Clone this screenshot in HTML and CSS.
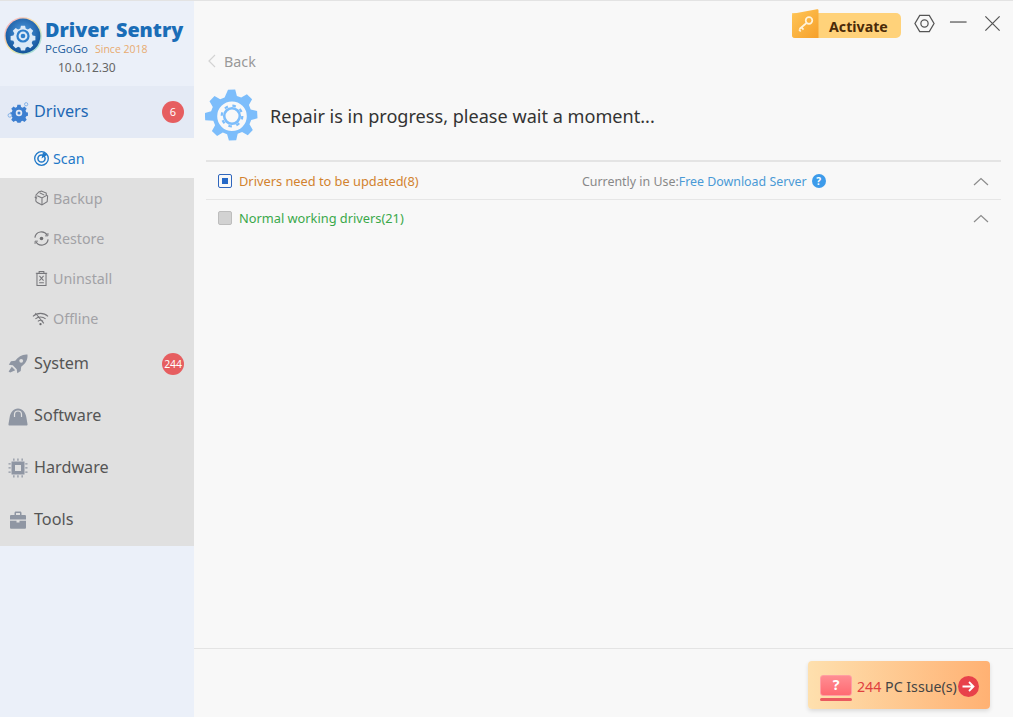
FILE: index.html
```html
<!DOCTYPE html>
<html lang="en">
<head>
<meta charset="utf-8">
<title>Driver Sentry</title>
<link rel="stylesheet" href="styles.css">
</head>
<body>
<div class="app">
  <aside class="sidebar">
    <div class="brand">
      <div class="brand-row">
        <svg class="logo" viewBox="0 0 38 38">
          <defs>
            <linearGradient id="ring" x1="0" y1="0" x2="1" y2="1"><stop offset="0" stop-color="#f3a6c8"/><stop offset=".5" stop-color="#f7e6a0"/><stop offset="1" stop-color="#7fd8ee"/></linearGradient>
            <radialGradient id="ball" cx=".5" cy=".4" r=".65"><stop offset="0" stop-color="#4f9be0"/><stop offset="1" stop-color="#0d4d94"/></radialGradient>
          </defs>
          <circle cx="19" cy="19" r="18.800" fill="url(#ring)"/>
          <circle cx="19" cy="19" r="17.400" fill="url(#ball)"/>
          <path d="M16.500 6.500h5l.8 3.400 2.600 1.100 3-1.800 3.500 3.500-1.800 3 1.100 2.600 3.400.8v5l-3.400.8-1.100 2.600 1.800 3-3.500 3.500-3-1.800-2.600 1.100-.8 3.400h-5l-.8-3.400-2.600-1.100-3 1.800-3.500-3.500 1.800-3-1.100-2.600-3.400-.8v-5l3.400-.8 1.100-2.600-1.800-3 3.500-3.500 3 1.800 2.600-1.100z" fill="#dbe9f7" transform="translate(19 19) scale(.82) translate(-19 -19)"/>
          <circle cx="19" cy="19" r="6.600" fill="#2f7fcb"/>
          <circle cx="19" cy="19" r="4.400" fill="#dbe9f7"/>
          <circle cx="19" cy="19" r="2.300" fill="#2f7fcb"/>
        </svg>
        <div class="brand-text">
          <div class="brand-name">Driver Sentry</div>
          <div class="brand-sub"><span class="brand-co">PcGoGo</span><span class="brand-since">Since 2018</span></div>
        </div>
      </div>
      <div class="version">10.0.12.30</div>
    </div>

    <nav class="nav">
      <div class="nav-item active">
        <svg class="nav-icon" viewBox="0 0 24 24"><path fill="#3d7fd0" d="M10.500 2.500h4l.5 2.600 2 .9 2.200-1.500 2.800 2.800-1.500 2.200.9 2 2.100.5v4l-2.100.5-.9 2 1.500 2.200-2.800 2.800-2.200-1.500-2 .9-.5 1.600h-4l-.5-1.600-2-.9-2.200 1.500-2.800-2.800 1.500-2.200-.9-2-2-.5v-4l2-.5.9-2-1.500-2.200 2.800-2.800 2.200 1.500 2-.9z" transform="translate(12.500 12.500) scale(.85) translate(-12.500 -12.500)"/><circle cx="12.500" cy="12.500" r="3.400" fill="#e4eaf5"/><circle cx="12.500" cy="12.500" r="1.600" fill="#3d7fd0"/><circle cx="3" cy="15" r="1.900" fill="#e4eaf5" stroke="#7fb0e6"/><circle cx="20" cy="3.400" r="1.700" fill="#e4eaf5" stroke="#7fb0e6"/></svg>
        <span class="nav-label">Drivers</span>
        <span class="badge">6</span>
      </div>
      <div class="sub-item current">
        <svg class="sub-icon" viewBox="0 0 18 18"><circle cx="9" cy="9" r="7.200" fill="none" stroke="#1f78c8" stroke-width="1.400"/><circle cx="9" cy="9" r="3.800" fill="none" stroke="#1f78c8" stroke-width="1.600"/><path d="M9 9l1.600-6.500 4.600 2.600z" fill="#1f78c8"/></svg>
        <span>Scan</span>
      </div>
      <div class="sub-item">
        <svg class="sub-icon" viewBox="0 0 18 18" fill="none" stroke="#77777b" stroke-width="1.100"><path d="M6 2.200l3-1.200 5 2.200v2l1.500 1.200-.5 6-5.500 3.400-5-2.500-1.500-1.500.2-6.500z"/><path d="M4.500 6l5 2.500 5-2.800M9.500 8.500v7M7 3l5 2.400M1.800 7.500l2.500 1.300"/></svg>
        <span>Backup</span>
      </div>
      <div class="sub-item">
        <svg class="sub-icon" viewBox="0 0 18 18" fill="none" stroke="#77777b" stroke-width="1.300"><path d="M2 8a7 7 0 0 1 13-2.500M16 10a7 7 0 0 1-13 2.500"/><path d="M15.800 3.200v3h-3M2.200 14.800v-3h3" stroke-width="1"/><circle cx="9" cy="9" r="1.900" fill="#6d6d70" stroke="none"/></svg>
        <span>Restore</span>
      </div>
      <div class="sub-item">
        <svg class="sub-icon" viewBox="0 0 18 18" fill="none" stroke="#77777b" stroke-width="1.100"><path d="M3 3.400h12M6.500 3V1.600h5V3M4.200 3.600h9.600v12.800H4.200z"/><path d="M6.800 6.200l4.400 5M11.200 6.200l-4.400 5M6.500 13.600h5"/></svg>
        <span>Uninstall</span>
      </div>
      <div class="sub-item">
        <svg class="sub-icon wide" viewBox="0 0 18 18" fill="none" stroke="#77777b" stroke-width="1.100"><path d="M1 6.800a11.500 11.500 0 0 1 16 0M3.600 9.400a8 8 0 0 1 10.800 0M6.200 12a4.400 4.400 0 0 1 5.600 0M3.500 3.200l9 11"/><circle cx="9" cy="15" r="1.200" fill="#6d6d70" stroke="none"/></svg>
        <span>Offline</span>
      </div>
      <div class="nav-item">
        <svg class="nav-icon" viewBox="0 0 20 20"><path fill="#8f96a3" d="M19.500.5c-5.300-.4-9.300 2-12.300 6.300L3 7.300.8 10.700l4 .6 3.900 3.900.6 4 3.400-2.200.5-4.200c4.300-3 6.700-7 6.300-12.300z"/><circle cx="13.200" cy="6.800" r="1.900" fill="#e0e0e0"/><path fill="#8f96a3" d="M3.800 12.800l3.400 3.400-5 2.400-1.600-1z"/></svg>
        <span class="nav-label">System</span>
        <span class="badge small">244</span>
      </div>
      <div class="nav-item">
        <svg class="nav-icon" viewBox="0 0 20 20"><path fill="#8f96a3" d="M1.700 19.500c-.9 0-1.400-.5-1.200-1.500l1.200-7C2.500 6.500 5.500 2.500 10 2.500s7.500 4 8.300 8.500l1.200 7c.2 1-.3 1.500-1.200 1.500z" /><path d="M6.500 11V8.500a3.500 3.500 0 0 1 7 0V11" fill="none" stroke="#e0e0e0" stroke-width="1.200"/></svg>
        <span class="nav-label">Software</span>
      </div>
      <div class="nav-item">
        <svg class="nav-icon" viewBox="0 0 20 20" fill="#8f96a3"><path fill-rule="evenodd" d="M3.500 3.500h13v13h-13zM7 7v6h6V7z"/><path d="M.5 5.200h2.200v1.300H.5zM.5 9.300h2.200v1.300H.5zM.5 13.500h2.200v1.300H.5zM17.300 5.200h2.200v1.300h-2.200zM17.300 9.300h2.200v1.300h-2.200zM17.300 13.500h2.200v1.300h-2.200zM5.200.5h1.300v2.200H5.200zM9.300.5h1.300v2.200H9.300zM13.500.5h1.300v2.200h-1.300zM5.200 17.300h1.300v2.200H5.200zM9.300 17.300h1.300v2.200H9.300zM13.500 17.300h1.300v2.200h-1.300z"/></svg>
        <span class="nav-label">Hardware</span>
      </div>
      <div class="nav-item">
        <svg class="nav-icon" viewBox="0 0 20 20" fill="#8f96a3"><path d="M2 9.500V6.300c0-.8.500-1.300 1.300-1.300h3.200V3c0-.8.500-1.500 1.500-1.500h4c1 0 1.500.7 1.500 1.500v2h3.200c.8 0 1.300.5 1.300 1.300v3.200zM8 5h4V3H8zM2 10.700h6.500v1.800h3v-1.800H18V17.500c0 .8-.5 1.300-1.300 1.300H3.300c-.8 0-1.300-.5-1.300-1.300z"/></svg>
        <span class="nav-label">Tools</span>
      </div>
    </nav>
  </aside>

  <main class="main">
    <header class="topbar">
      <div class="activate">
        <svg class="key-tab" viewBox="0 0 27 29">
          <defs><linearGradient id="tab" x1="0" y1="0" x2="1" y2="1"><stop offset="0" stop-color="#ffc658"/><stop offset="1" stop-color="#f6a02a"/></linearGradient></defs>
          <path d="M2 4.500 25 .2c1-.2 1.500.3 1.500 1.300V29H3c-1.800 0-3-1-3-3V7c0-1.300.8-2.200 2-2.500z" fill="url(#tab)"/>
          <g fill="none" stroke="#fff3d9" stroke-width="1.700"><circle cx="17" cy="11.500" r="3.300"/><path d="M14.500 14 7.500 20M9.500 18.300l2 2.300M7 20.500l1.700 2"/></g>
        </svg>
        <span class="activate-label">Activate</span>
      </div>
      <button class="win-btn settings" aria-label="Settings">
        <svg viewBox="0 0 22 22" fill="none" stroke="#555" stroke-width="1.300"><path d="M6 2.500h10l5 8.500-5 8.500H6L1 11z"/><circle cx="11" cy="11" r="3.800"/></svg>
      </button>
      <button class="win-btn minimize" aria-label="Minimize">
        <svg viewBox="0 0 20 20" stroke="#555" stroke-width="1.300"><path d="M1 9.500h17.500"/></svg>
      </button>
      <button class="win-btn close" aria-label="Close">
        <svg viewBox="0 0 20 20" stroke="#555" stroke-width="1.300"><path d="M2.500 2.500l15 15M17.500 2.500l-15 15"/></svg>
      </button>
    </header>

    <div class="back">
      <svg viewBox="0 0 8 14" fill="none" stroke="#d3d3d3" stroke-width="1.200"><path d="M7 1 1 7l6 6"/></svg>
      <span>Back</span>
    </div>

    <div class="status">
      <svg class="gear" viewBox="0 0 54 54">
        <path fill="#7cbdfb" fill-rule="evenodd" d="M23 .8l7.200-.3 1.700 6.400 4.300 1.700 5.700-3.300 5.200 5-3.200 5.700 1.800 4.400 6.400 1.500.4 7.300-6.300 1.800-1.700 4.300 3.300 5.700-5 5.200-5.700-3.200-4.400 1.800-1.500 6.400-7.300.4-1.800-6.300-4.300-1.700-5.700 3.300-5.200-5 3.200-5.700-1.800-4.400L.2 31.300l-.4-7.300 6.300-1.800 1.700-4.300-3.300-5.700 5-5.200 5.700 3.200 4.400-1.800zM27 12.500a14.800 14.800 0 1 0 0 29.600 14.800 14.800 0 0 0 0-29.600z"/>
        <g fill="none" stroke="#7cbdfb"><circle cx="27" cy="27" r="7.800" stroke-width="2.600"/><circle cx="27" cy="27" r="10.300" stroke-width="2.200" stroke-dasharray="3.500 4.600"/></g>
      </svg>
      <h1>Repair is in progress, please wait a moment...</h1>
    </div>

    <section class="list">
      <div class="row first">
        <span class="check on"></span>
        <span class="row-title orange">Drivers need to be updated(8)</span>
        <span class="server"><span class="server-key">Currently in Use:</span><span class="server-val">Free Download Server</span><span class="help">?</span></span>
        <svg class="chev" viewBox="0 0 16 9" fill="none" stroke="#8c8c8c" stroke-width="1.200"><path d="M1 8l7-6.500L15 8"/></svg>
      </div>
      <div class="row second">
        <span class="check"></span>
        <span class="row-title green">Normal working drivers(21)</span>
        <svg class="chev" viewBox="0 0 16 9" fill="none" stroke="#8c8c8c" stroke-width="1.200"><path d="M1 8l7-6.500L15 8"/></svg>
      </div>
    </section>

    <footer class="footer">
      <div class="issues">
        <div class="laptop"><span class="screen">?</span><span class="base"></span></div>
        <span class="issues-text"><span class="count">244</span> PC Issue(s)</span>
        <svg class="arrow" viewBox="0 0 21 21"><circle cx="10.500" cy="10.500" r="10.500" fill="#e8414a"/><path d="M4.500 10.500h11M11 6l4.500 4.500L11 15" fill="none" stroke="#fff" stroke-width="1.800"/></svg>
      </div>
    </footer>
  </main>
</div>
</body>
</html>
```

FILE: styles.css
```css
* { box-sizing: border-box; }
html, body { margin: 0; padding: 0; height: 100%; overflow: hidden; }
body { font-family: "Noto Sans", sans-serif; background: #f8f8f8; }

.app { display: flex; width: 1013px; height: 717px; border-top: 1px solid #e3e3e3; }

.sidebar { width: 194px; flex: none; background: #ebf0f9; display: flex; flex-direction: column; }

.brand { height: 85px; padding: 15px 0 0 4px; }
.brand-row { display: flex; gap: 3px; align-items: flex-start; }
.logo { width: 38px; height: 38px; flex: none; margin-top: 1px; }
.brand-name { font-family: "Open Sans", sans-serif; font-weight: 800; font-size: 19.800px; line-height: 26px; color: #1a6db7; word-spacing: 2px; white-space: nowrap; margin-top: 1px; }
.brand-sub { display: flex; gap: 7px; font-family: "Open Sans", sans-serif; font-size: 11.500px; line-height: 14px; margin-top: -1px; }
.brand-co { color: #1b5c9c; }
.brand-since { color: #e8ab70; font-size: 10.500px; }
.version { font-size: 12px; line-height: 16px; color: #666; margin: 4px 0 0 54px; }

.nav-item { height: 52px; background: #e0e0e0; display: flex; align-items: center; padding: 0 10px 0 8px; color: #555; }
.nav-item.active { background: #e4eaf5; color: #1d68b4; }
.nav-icon { width: 20px; height: 20px; flex: none; }
.nav-item.active .nav-icon { width: 23px; height: 23px; margin-left: -1px; }
.nav-item.active .nav-label { margin-left: 4px; }
.nav-label { margin: -3px 0 0 6px; font-size: 16.200px; line-height: 22px; flex: 1; }
.badge { width: 22px; height: 22px; border-radius: 50%; background: #e65e60; color: #fff; font-size: 11px; line-height: 22px; text-align: center; flex: none; }
.badge.small { font-size: 10.500px; letter-spacing: -.2px; }

.sub-item { height: 40px; background: #e0e0e0; display: flex; align-items: center; padding-left: 33px; gap: 3px; font-size: 14.300px; color: #a2a2a6; }
.sub-item.current { background: #f8f8f8; color: #1f78c8; }
.sub-icon { width: 17px; height: 17px; flex: none; }
.sub-icon.wide { width: 19px; margin-left: -2px; margin-right: 0; }

.main { flex: 1; min-width: 0; display: flex; flex-direction: column; background: #f8f8f8; }

.topbar { height: 43px; display: flex; align-items: flex-start; padding: 8px 11px 0 0; justify-content: flex-end; }
.activate { width: 109px; height: 25px; margin: 4px 13px 0 0; border-radius: 0 5px 5px 3px; background: #ffd27a; display: flex; align-items: center; position: relative; padding: 2px 0 0 37px; }
.activate-label { font-weight: 700; font-size: 14.200px; line-height: 20px; color: #4a2a08; }
.key-tab { position: absolute; left: 0; top: -4px; width: 27px; height: 29px; }
.win-btn { background: none; border: 0; padding: 0; display: block; }
.win-btn svg { display: block; width: 100%; height: 100%; }
.settings { width: 21px; height: 21px; margin: 4px 14px 0 0; }
.minimize { width: 19px; height: 19px; margin: 4px 15px 0 0; }
.close { width: 19px; height: 19px; margin: 5px 0 0 0; }

.back { display: flex; align-items: center; gap: 8px; height: 34px; padding-left: 14px; font-size: 14.300px; color: #999; flex: none; }
.back svg { width: 8px; height: 14px; }

.status { display: flex; align-items: center; height: 56px; margin-top: 10px; padding-left: 11px; gap: 11px; flex: none; }
.gear { width: 54px; height: 54px; flex: none; }
.status h1 { margin: 0; font-weight: 400; font-size: 18.100px; line-height: 26px; color: #333; white-space: nowrap; }

.list { margin: 16px 12px 0 12px; flex: 1; }
.row { height: 38px; display: flex; align-items: center; border-bottom: 1px solid #e6e6e6; padding: 0 12px; font-size: 12.800px; }
.row.first { border-top: 2px solid #e4e4e4; height: 40px; padding-top: 1px; }
.row.second { border-bottom: 0; padding-bottom: 2px; }
.check { width: 14px; height: 14px; flex: none; border-radius: 2px; background: #d2d2d2; border: 1px solid #bdbdbd; margin-right: 7px; position: relative; }
.check.on { background: #f8f8f8; border-color: #2f66bd; }
.check.on::after { content: ""; position: absolute; left: 3px; top: 3px; width: 6px; height: 6px; background: #2568c6; }
.row-title { flex: none; width: 179px; white-space: nowrap; }
.orange { color: #d2832f; }
.green { color: #3aa84a; }
.server { margin-left: 164px; display: flex; align-items: center; color: #888; white-space: nowrap; font-size: 12.400px; }
.server-val { color: #4a9ad6; }
.help { width: 14px; height: 14px; margin-left: 5px; border-radius: 50%; background: #3d9bea; color: #fff; font-size: 10px; line-height: 14px; font-weight: 700; text-align: center; }
.chev { width: 16px; height: 9px; margin-left: auto; }

.footer { height: 69px; border-top: 1px solid #e4e4e4; display: flex; justify-content: flex-end; padding: 12px 23px 0 0; flex: none; }
.issues { width: 182px; height: 48px; border-radius: 4px; background: linear-gradient(90deg, #fee0ae, #ffb173); box-shadow: 0 2px 4px rgba(0,0,0,.12); display: flex; align-items: center; padding-left: 12px; }
.laptop { width: 32px; flex: none; display: flex; flex-direction: column; gap: 2px; margin-top: 5px; }
.screen { height: 21px; border-radius: 3px; background: linear-gradient(180deg, #ff8d92, #ff6a72); border: 1px solid #ff9fa3; color: #fff; font-size: 14px; line-height: 17px; text-align: center; font-weight: 700; }
.base { height: 3px; border-radius: 2px; background: #ea5a5f; }
.issues-text { margin: 4px 0 0 5px; font-size: 14.200px; line-height: 20px; color: #444; white-space: nowrap; }
.count { color: #e0403f; }
.arrow { width: 21px; height: 21px; flex: none; margin: 2px 0 0 1px; }
```
